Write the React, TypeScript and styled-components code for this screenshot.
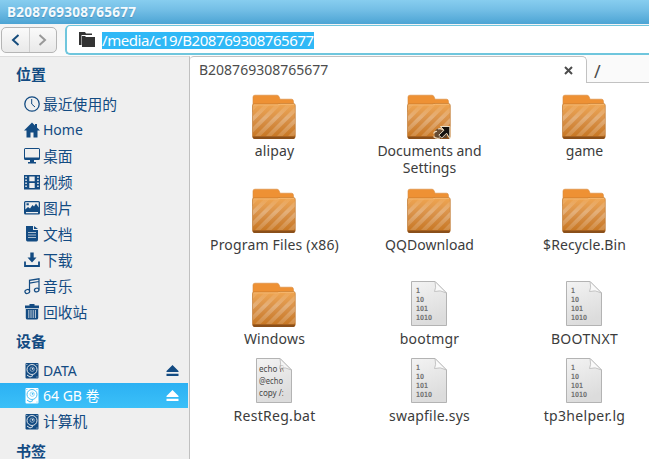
import React from "react";
import styled, { createGlobalStyle } from "styled-components";

const Global = createGlobalStyle`
  * { box-sizing: border-box; }
  body { margin: 0; overflow: hidden; background: #fff; font-family: "Noto Sans", "Noto Sans CJK SC", sans-serif; }
  svg { display: block; flex: none; overflow: visible; }
`;

const Window = styled.div`
  width: 649px; height: 459px; overflow: hidden;
  display: flex; flex-direction: column; background: #fff;
`;
const TitleBar = styled.div`
  height: 24px; flex: none; padding-left: 7px;
  background: linear-gradient(#87cdef, #74bfe6 40%, #4ca4d4);
  color: #f4fafd; font-size: 13.5px; font-weight: 700; line-height: 24px; letter-spacing: 0.28px;
  text-shadow: 0 1px 1px rgba(30, 90, 140, 0.35);
`;
const Toolbar = styled.div`
  height: 32px; flex: none; display: flex; align-items: flex-start; gap: 8px;
  padding: 1px 0 0 1px; background: linear-gradient(#f4f4f4, #fbfbfb);
`;
const NavGroup = styled.div`
  display: flex; width: 56px; height: 26px; margin-top: 2px; flex: none;
  border: 1px solid #b5b5b5; border-radius: 5px; overflow: hidden;
  background: linear-gradient(#fafafa, #e9e9e9);
`;
const NavButton = styled.div<{ $divided?: boolean }>`
  flex: 1; display: flex; align-items: center; justify-content: center;
  border-right: ${(p) => (p.$divided ? "1px solid #cfcfcf" : "0")};
`;
const PathField = styled.div`
  flex: 1; height: 30px; display: flex; align-items: center; gap: 7px; padding-left: 12px;
  border: 1px solid #6fc6dd; border-width: 1px 0 2px 2px; border-radius: 5px 0 0 5px; background: #fff;
`;
const PathText = styled.span`
  height: 17px; line-height: 17px; font-size: 15px; letter-spacing: -0.44px; margin-top: 1px;
  color: #fff; background: #2fb8f6; white-space: nowrap;
`;
const Body = styled.div`flex: 1; min-height: 0; display: flex;`;
const Sidebar = styled.div`
  width: 190px; flex: none; padding-top: 4px; overflow: hidden;
  background: #efefef; border-top: 1px solid #dcdcdc; border-right: 1px solid #c0c0c0;
  color: #134b82;
`;
const Heading = styled.div<{ $h: number; $line: number }>`
  height: ${(p) => p.$h}px; line-height: ${(p) => p.$line}px; padding-left: 16px;
  font-size: 15px; font-weight: 700;
`;
const Place = styled.div<{ $selected?: boolean; $h?: number }>`
  height: ${(p) => p.$h || 26}px; display: flex; align-items: center;
  padding: 0 9px 0 24px; margin-right: 1px; gap: 3px; font-size: 15px;
  color: ${(p) => (p.$selected ? "#fff" : "#134b82")};
  background: ${(p) => (p.$selected ? "linear-gradient(#2cb1f3, #3bc0f8)" : "none")};
`;
const PlaceName = styled.span<{ $latin?: boolean }>`
  flex: 1; white-space: nowrap; line-height: 24px;
  font-size: ${(p) => (p.$latin ? 14 : 14.8)}px;
  margin-top: ${(p) => (p.$latin ? 0 : -1)}px;
`;
const Main = styled.div`flex: 1; min-width: 0; display: flex; flex-direction: column; background: #fff;`;
const Tabs = styled.div`height: 27px; flex: none; display: flex; color: #4c4c4c; font-size: 14px;`;
const ActiveTab = styled.div`
  width: 397px; height: 27px; display: flex; align-items: center; justify-content: space-between;
  padding: 0 13px 0 9px; border: 1px solid #c2c2c2; border-width: 1px 1px 0 0; border-radius: 4px 5px 0 0;
  font-size: 14px; line-height: 25px; white-space: nowrap;
`;
const TabName = styled.span`margin-top: -2px;`;
const OtherTab = styled.div`
  flex: 1; padding: 2px 0 0 7px; line-height: 26px; font-size: 18px;
  border-bottom: 1px solid #c2c2c2; background: #fafafa;
`;
const Files = styled.div`
  display: grid; grid-template-columns: 155px 155px 155px; grid-template-rows: 94px 94px 77px 77px;
  padding: 9px 0 0 7px;
`;
const File = styled.div`display: flex; flex-direction: column; align-items: center;`;
const FileIcon = styled.div`height: 50px; width: 48px; flex: none; margin-right: 2px;`;
const FileName = styled.div<{ $ls: number }>`
  font-size: 14px; line-height: 17px; color: #3c3c3c; text-align: center; white-space: pre;
  letter-spacing: ${(p) => p.$ls}px;
`;

function Folder({ link }: { link?: boolean }) {
  return (
    <svg width="48" height="48" viewBox="0 0 48 48">
      <defs>
        <linearGradient id="folderFront" x1="0" y1="0" x2="0" y2="1">
          <stop offset="0" stopColor="#f0a550" /><stop offset="0.45" stopColor="#d9924a" /><stop offset="1" stopColor="#c6741f" />
        </linearGradient>
        <linearGradient id="stripeFade" x1="0" y1="0" x2="0" y2="1">
          <stop offset="0" stopColor="#fff" stopOpacity="0.03" /><stop offset="0.4" stopColor="#fff" stopOpacity="0.26" />
          <stop offset="1" stopColor="#fff" stopOpacity="0.14" />
        </linearGradient>
        <clipPath id="frontArea"><path d="M3 13H45V44H3Z" /></clipPath>
      </defs>
      <path d="M3 5Q3 3.200 5 3.200H27Q28.600 3.200 29.200 5L30 7.200H41.500Q43.500 7.200 43.500 9.500V20H3Z" fill="#ee9134" stroke="#d98a3b" strokeWidth="0.6" />
      <path d="M2.500 13.500Q2.500 12 4 12H27L30 11.500H43.500Q45.300 11.500 45.300 13.500V44Q45.300 46.500 43.500 46.500H4.500Q2.500 46.500 2.500 44Z" fill="url(#folderFront)" stroke="#b9722c" strokeWidth="0.6" />
      <g clipPath="url(#frontArea)">
        <path fill="url(#stripeFade)" d="M-8 46L26 12H31.500L-2.500 46ZM3 46L37 12H42.500L8.500 46ZM14 46L48 12H53.500L19.500 46ZM25 46L59 12H64.500L30.500 46ZM36 46L70 12H75.500L41.500 46ZM-19 46L15 12H20.500L-13.500 46ZM-30 46L4 12H9.500L-24.500 46Z" />
      </g>
      <path d="M3.500 12.900H27.300L30.300 12.300H44.300" stroke="#f9bf7b" fill="none" strokeWidth="0.800" />
      <path d="M2.600 44.400H45.200V45Q44.700 47 43.500 47H4.500Q3 47 2.600 45Z" fill="#8a4f1a" />
      {link && (
        <g>
          <path d="M29.500 43Q29 37 34 36.500L38 38L42 41V46H33Q30 46 29.500 43Z" fill="#5a4531" opacity="0.9" />
          <path d="M28.500 41.500Q30 39 32 39.500M28.500 44.500Q31 47 35 46M33 37Q36 36 38 38" stroke="#ead6b9" fill="none" strokeWidth="1.200" />
          <path d="M35.500 34.500H44.800V46.500L41.600 41.200L36.800 46L33.800 43.200L39 38.200Z" fill="#15120f" stroke="#f5ead3" strokeWidth="0.900" />
        </g>
      )}
    </svg>
  );
}

function Doc({ lines, script }: { lines: string[]; script?: boolean }) {
  return (
    <svg width="48" height="48" viewBox="0 0 48 48">
      <defs>
        <linearGradient id="paper" x1="0" y1="0" x2="0.3" y2="1">
          <stop offset="0" stopColor="#f3f3f3" /><stop offset="1" stopColor="#dcdcdc" />
        </linearGradient>
        <clipPath id="paperArea"><path d="M5 1H33.500V46H5Z" /></clipPath>
      </defs>
      <path d="M6.500 1.500H30L41.500 13V45.500H6.500Z" fill="url(#paper)" stroke="#b3b3b3" />
      <g clipPath={script ? "url(#paperArea)" : undefined} fill={script ? "#484848" : "#757575"}>
        {lines.map((t, i) => (
          <text
            key={t} x={script ? 9 : 11} y={script ? 15 + i * 12 : 13 + i * 9.100}
            fontFamily={script ? "Noto Sans" : "DejaVu Sans"} fontSize={script ? 9 : 7.200}
            fontWeight={script ? 400 : 700} textLength={script ? [25.500, 24, 25][i] : t.length * 4}
            lengthAdjust="spacingAndGlyphs"
          >{t}</text>
        ))}
      </g>
      <path d="M30 1.500Q31.500 8 29.500 11.500Q35 9.500 41.500 13Z" fill="#fafafa" fillOpacity={script ? 0.7 : 1} stroke="#b9b9b9" strokeWidth="0.8" />
    </svg>
  );
}

const icons: Record<string, React.ReactNode> = {
  clock: <g fill="none" stroke="currentColor"><circle cx="8" cy="8" r="7.200" strokeWidth="1.300" /><path d="M7.700 3V8L11 11" strokeWidth="1" /></g>,
  home: <path d="M8 .5L0 8.500H2.500V15.500H6.500V10.500H9.500V15.500H13.500V8.500H16L13 5.500V2H11V3.500Z" fill="currentColor" />,
  desktop: <g fill="currentColor"><path fillRule="evenodd" d="M1.500 0H14.500Q16 0 16 1.500V10.500Q16 12 14.500 12H1.500Q0 12 0 10.500V1.500Q0 0 1.500 0ZM1 1V9.500H15V1Z" /><path d="M6 12H10V14H12V15.500H4V14H6Z" /></g>,
  video: <path fill="currentColor" fillRule="evenodd" d="M0 1H16V15.500H0ZM5.300 2.500V7.300H10.700V2.500ZM5.300 9V14H10.700V9ZM1.300 2.500V4H2.800V2.500ZM1.300 5.500V7H2.800V5.500ZM1.300 8.500V10H2.800V8.500ZM1.300 11.500V13H2.800V11.500ZM13.200 2.500V4H14.700V2.500ZM13.200 5.500V7H14.700V5.500ZM13.200 8.500V10H14.700V8.500ZM13.200 11.500V13H14.700V11.500Z" />,
  picture: <path fill="currentColor" fillRule="evenodd" d="M1.500 1H14.500Q16 1 16 2.500V13Q16 14.500 14.500 14.500H1.500Q0 14.500 0 13V2.500Q0 1 1.500 1ZM1.300 2.300V9.500L4 7L6 8.500L8.500 5L10 6.500L12 3.500L14.700 7.500V2.300ZM2.500 3.300H4.800V5.300H2.500ZM2 12V13.200H14V12Z" />,
  document: <g><path d="M2 0H9V4H14V13.500Q14 15.500 12.500 15.500H3.500Q2 15.500 2 13.500ZM10 0L14 3H10Z" fill="currentColor" /><path d="M4 6.500H12M4 9H12M4 11.500H12" stroke="#efefef" strokeWidth="0.700" /></g>,
  download: <g><path d="M6.300 0.500H9.700V5.500H12.500L8 10.500L3.500 5.500H6.300Z" fill="currentColor" /><path d="M1 9.500V14H15V9.500" fill="none" stroke="currentColor" strokeWidth="1.800" /></g>,
  music: <g fill="none" stroke="currentColor" strokeWidth="1.200"><path d="M5.500 13V2.300L15 .8V11.500M5.500 5.200L15 3.500" /><ellipse cx="3.300" cy="13.500" rx="2.400" ry="1.900" transform="rotate(-20 3.300 13.500)" /><ellipse cx="12.700" cy="12" rx="2.300" ry="1.800" transform="rotate(-20 12.700 12)" /></g>,
  trash: <g><path d="M5.500 0H10.500V1.500H15V4.200H1V1.500H5.500ZM1.800 5H14.200V14Q14 15.500 12.500 15.500H3.500Q1.800 15.500 1.800 14Z" fill="currentColor" /><path d="M4.800 6V14M7 6V14M9.200 6V14M11.400 6V14" stroke="#efefef" strokeWidth="0.8" /></g>,
};

function PlaceIcon({ name }: { name: string }) {
  return <svg width="16" height="16" viewBox="0 0 16 16">{icons[name]}</svg>;
}

function Disk({ ground = "#efefef" }: { ground?: string }) {
  return (
    <svg width="16" height="16" viewBox="0 0 16 16">
      <rect x="1.500" y="0" width="13" height="15.500" rx="1" fill="currentColor" />
      <circle cx="8" cy="6.500" r="5" fill="none" stroke={ground} strokeWidth="0.900" />
      <circle cx="8.200" cy="6.200" r="2.200" fill="none" stroke={ground} strokeWidth="0.500" />
      <circle cx="8.600" cy="5.800" r="0.900" fill={ground} />
      <path d="M3 12L6 14L9 12.500" fill="none" stroke={ground} />
      <path d="M2.500 1.500H3.300M12.600 1.500H13.400M12.600 14H13.400" stroke={ground} />
    </svg>
  );
}

function Eject() {
  return (
    <svg width="13" height="12" viewBox="0 0 13 12" fill="currentColor">
      <path d="M6.500 0L12.500 6V7H.5V6ZM.5 8.800H12.500V11H.5Z" />
    </svg>
  );
}

const places = [
  ["clock", "最近使用的"], ["home", "Home"], ["desktop", "桌面"], ["video", "视频"], ["picture", "图片"],
  ["document", "文档"], ["download", "下载"], ["music", "音乐"], ["trash", "回收站"],
];

const files: { name: string; kind: "folder" | "link" | "binary" | "script"; ls: number }[] = [
  { name: "alipay", kind: "folder", ls: 0.15 },
  { name: "Documents and\nSettings", kind: "link", ls: 0 },
  { name: "game", kind: "folder", ls: 0 },
  { name: "Program Files (x86)", kind: "folder", ls: 0.17 },
  { name: "QQDownload", kind: "folder", ls: 0.05 },
  { name: "$Recycle.Bin", kind: "folder", ls: 0.08 },
  { name: "Windows", kind: "folder", ls: 0.2 },
  { name: "bootmgr", kind: "binary", ls: 0.2 },
  { name: "BOOTNXT", kind: "binary", ls: 0.3 },
  { name: "RestReg.bat", kind: "script", ls: 0.3 },
  { name: "swapfile.sys", kind: "binary", ls: 0.2 },
  { name: "tp3helper.lg", kind: "binary", ls: 0.3 },
];

export default function App() {
  return (
    <Window>
      <Global />
      <TitleBar>B208769308765677</TitleBar>
      <Toolbar>
        <NavGroup>
          <NavButton $divided>
            <svg width="9" height="12" viewBox="0 0 9 12"><path d="M7.500 1L2 6L7.500 11" fill="none" stroke="#174d7d" strokeWidth="2" /></svg>
          </NavButton>
          <NavButton>
            <svg width="9" height="12" viewBox="0 0 9 12"><path d="M1.500 1L7 6L1.500 11" fill="none" stroke="#999" strokeWidth="2" /></svg>
          </NavButton>
        </NavGroup>
        <PathField>
          <svg width="16" height="15" viewBox="0 0 16 15" fill="#333"><path d="M0 0H6L7 1.500H13V3H2.500V13H0ZM3 4H6L7 5H16V15H3Z" /></svg>
          <PathText>/media/c19/B208769308765677</PathText>
        </PathField>
      </Toolbar>
      <Body>
        <Sidebar>
          <Heading $h={30} $line={26}>位置</Heading>
          {places.map(([icon, name]) => (
            <Place key={name}>
              <PlaceIcon name={icon} />
              <PlaceName $latin={name === "Home"}>{name}</PlaceName>
            </Place>
          ))}
          <Heading $h={33} $line={32}>设备</Heading>
          <Place $h={25}><Disk /><PlaceName $latin>DATA</PlaceName><Eject /></Place>
          <Place $h={25} $selected><Disk ground="#35b9f5" /><PlaceName $latin>64 GB 卷</PlaceName><Eject /></Place>
          <Place $h={27}><Disk /><PlaceName>计算机</PlaceName></Place>
          <Heading $h={28} $line={32}>书签</Heading>
        </Sidebar>
        <Main>
          <Tabs>
            <ActiveTab>
              <TabName>B208769308765677</TabName>
              <svg width="9" height="9" viewBox="0 0 9 9"><path d="M1 1L8 8M8 1L1 8" stroke="#4c4c4c" strokeWidth="2" /></svg>
            </ActiveTab>
            <OtherTab>/</OtherTab>
          </Tabs>
          <Files>
            {files.map((f) => (
              <File key={f.name}>
                <FileIcon>
                  {f.kind === "binary" ? <Doc lines={["1", "10", "101", "1010"]} />
                    : f.kind === "script" ? <Doc script lines={["echo R", "@echo", "copy /:"]} />
                    : <Folder link={f.kind === "link"} />}
                </FileIcon>
                <FileName $ls={f.ls}>{f.name}</FileName>
              </File>
            ))}
          </Files>
        </Main>
      </Body>
    </Window>
  );
}
